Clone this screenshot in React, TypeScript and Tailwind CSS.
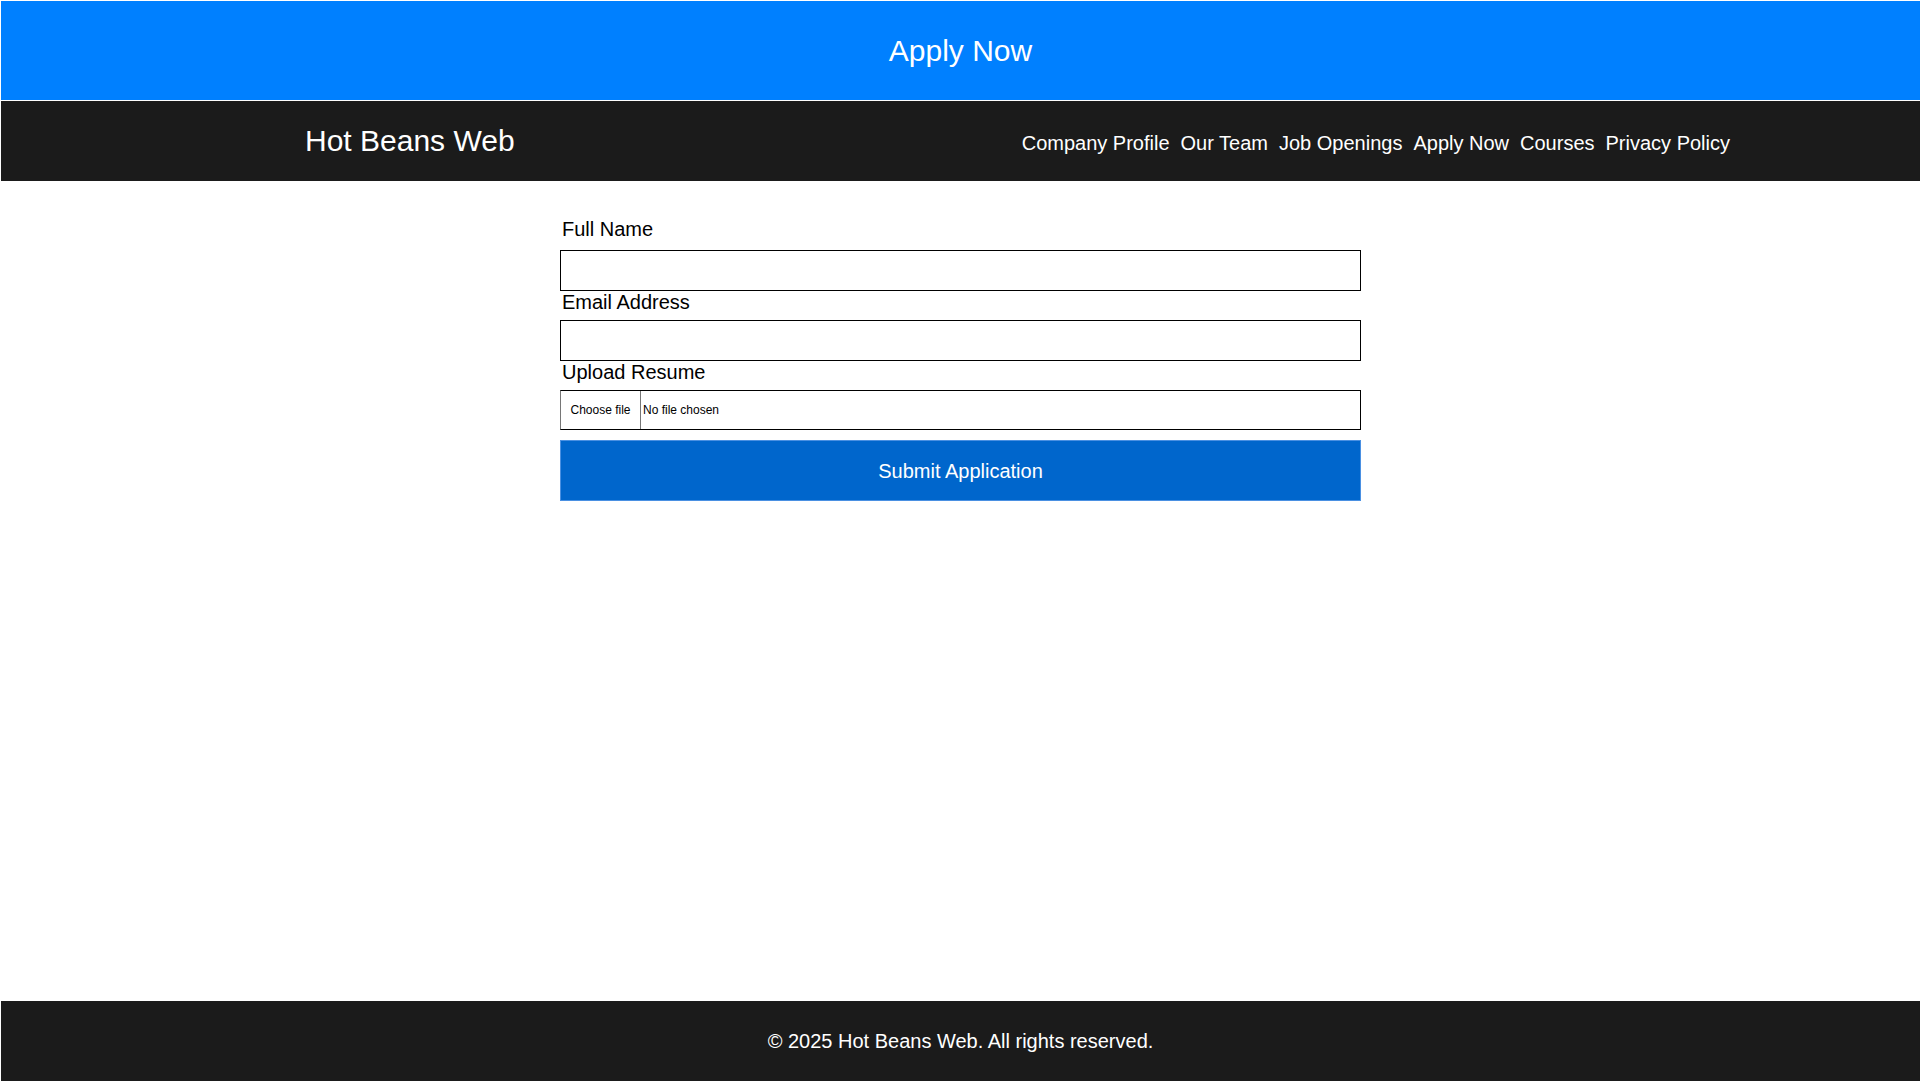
import { useState } from "react";

const links = ["Company Profile", "Our Team", "Job Openings", "Apply Now", "Courses", "Privacy Policy"];

function Field({ id, label, type, gap }: { id: string; label: string; type: string; gap: string }) {
  return (
    <div>
      <label htmlFor={id} className="block pl-[2px] text-[20px] leading-[23px] text-black">
        {label}
      </label>
      <input
        id={id}
        type={type}
        className={`${gap} block h-[41px] w-full border border-black bg-white px-2 text-[16px] outline-none`}
      />
    </div>
  );
}

export default function App() {
  const [fileName, setFileName] = useState<string | null>(null);

  return (
    <div className="flex min-h-screen flex-col bg-white px-px pt-px font-['Liberation_Sans',Arial,sans-serif]">
      <header className="flex h-[99px] items-center justify-center bg-[#0080ff] text-[30px] text-white">
        Apply Now
      </header>

      <nav className="mt-px flex h-[80px] items-center justify-between bg-[#1b1b1b] pl-[304px] pr-[190px] text-white">
        <div className="-mt-[2px] text-[30px]">Hot Beans Web</div>
        <ul className="mt-[3px] flex gap-[11px] text-[20px]">
          {links.map((link) => (
            <li key={link}>
              <a href="#" className="text-white">
                {link}
              </a>
            </li>
          ))}
        </ul>
      </nav>

      <main className="flex-1">
        <form className="mx-auto w-[801px] pt-[37px]" onSubmit={(e) => e.preventDefault()}>
          <Field id="name" label="Full Name" type="text" gap="mt-[9px]" />
          <Field id="email" label="Email Address" type="email" gap="mt-[6px]" />
          <div>
            <div className="block pl-[2px] text-[20px] leading-[23px] text-black">Upload Resume</div>
            <label className="mt-[6px] flex h-[40px] w-full cursor-pointer items-stretch border border-black border-l-[#767676] text-[12px] text-black">
              <span className="flex w-[80px] items-center justify-center border-r border-[#767676]">Choose file</span>
              <span className="flex items-center pl-[2px]">{fileName ?? "No file chosen"}</span>
              <input
                type="file"
                className="sr-only"
                onChange={(e) => setFileName(e.target.files?.[0]?.name ?? null)}
              />
            </label>
          </div>
          <button
            type="submit"
            className="mt-[10px] block h-[61px] w-full border border-[#4a90e2] bg-[#0066cc] text-[20px] text-white"
          >
            Submit Application
          </button>
        </form>
      </main>

      <footer className="flex h-[80px] items-center justify-center bg-[#1b1b1b] text-[20px] text-white">
        © 2025 Hot Beans Web. All rights reserved.
      </footer>
    </div>
  );
}
